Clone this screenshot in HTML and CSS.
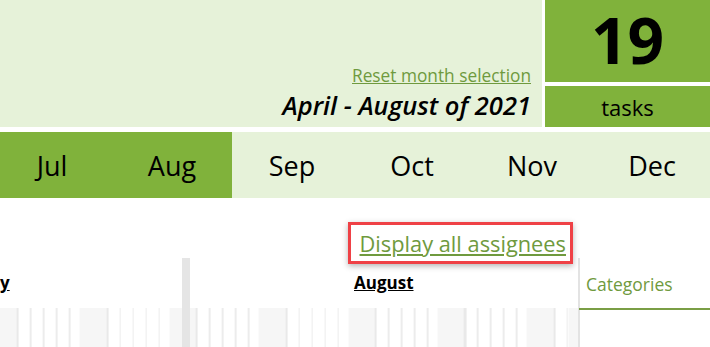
FILE: index.html
```html
<!DOCTYPE html>
<html lang="en">
<head>
    <title>Tasks overview</title>
    <meta charset="UTF-8">
    <meta name="viewport" content="width=device-width, initial-scale=1.0">
    <link rel="stylesheet" href="styles.css">
</head>
<body>
    <header class="summary">
        <div class="period">
            <a class="reset-link" href="#">Reset month selection</a>
            <div class="period-title">April - August of 2021</div>
        </div>
        <div class="count">
            <div class="count-number">19</div>
            <div class="count-label">tasks</div>
        </div>
    </header>

    <nav class="months">
        <div class="month selected">Jul</div>
        <div class="month selected">Aug</div>
        <div class="month">Sep</div>
        <div class="month">Oct</div>
        <div class="month">Nov</div>
        <div class="month">Dec</div>
    </nav>

    <div class="toolbar">
        <span class="highlight"><a class="assignees-link" href="#">Display all assignees</a></span>
    </div>

    <main class="board">
        <section class="timeline">
            <div class="timeline-head">
                <span class="month-label july">July</span>
                <span class="month-label">August</span>
            </div>
            <div class="days"></div>
            <div class="today-marker"></div>
        </section>
        <aside class="side">
            <div class="side-tab">Categories</div>
        </aside>
    </main>
</body>
</html>
```

FILE: styles.css
```css
html, body {
    overflow: hidden;
}
body {
    margin: 0;
    font-family: "Open Sans", "DejaVu Sans", sans-serif;
    background-color: #fff;
    color: #000;
    height: 100vh;
    display: flex;
    flex-direction: column;
}
a {
    color: #6f9a3e;
}

/* summary header */
.summary {
    display: flex;
    height: 127px;
    flex: none;
}
.period {
    flex: 1;
    background-color: #e6f2d9;
    display: flex;
    flex-direction: column;
    align-items: flex-end;
    justify-content: flex-end;
    padding: 0 11px 4px 0;
}
.reset-link {
    font-size: 17.3px;
    line-height: 22px;
}
.period-title {
    font-size: 25.5px;
    font-weight: 600;
    font-style: italic;
    line-height: 36px;
}
.count {
    width: 165px;
    border-left: 3px solid #fff;
    display: flex;
    flex-direction: column;
}
.count-number {
    height: 82px;
    background-color: #80b23b;
    font-size: 64px;
    font-weight: 700;
    line-height: 80px;
    text-align: center;
}
.count-label {
    flex: 1;
    margin-top: 4px;
    background-color: #80b23b;
    font-size: 22px;
    display: flex;
    align-items: center;
    justify-content: center;
}

/* month picker */
.months {
    flex: none;
    display: flex;
    height: 66px;
    margin: 5px 0 0 -8px;
    background-color: #e6f2d9;
    overflow: hidden;
}
.month {
    flex: 0 0 120px;
    display: flex;
    align-items: center;
    justify-content: center;
    font-size: 27px;
}
.month.selected {
    background-color: #80b23b;
}

/* toolbar */
.toolbar {
    flex: none;
    height: 60px;
    display: flex;
    justify-content: flex-end;
    align-items: flex-start;
    padding-right: 137px;
}
.highlight {
    margin-top: 24px;
    height: 36px;
    display: flex;
    align-items: center;
    padding: 0 4px 0 9px;
    border: 3px solid #ef4146;
    box-shadow: 0 2px 6px rgba(0, 0, 0, 0.3);
    position: relative;
    z-index: 2;
}
.assignees-link {
    font-size: 21.8px;
}

/* board */
.board {
    flex: 1;
    display: flex;
}
.timeline {
    flex: 1;
    position: relative;
    overflow: hidden;
    display: flex;
    flex-direction: column;
}
.timeline-head {
    height: 50px;
    display: flex;
    padding-top: 13px;
    box-sizing: border-box;
}
.month-label {
    flex: none;
    font-size: 17px;
    font-weight: 700;
    text-decoration: underline;
}
.month-label.july {
    margin-left: -22px;
    width: 376px;
}
.days {
    flex: 1;
    background-image: repeating-linear-gradient(to right,
        #f6f6f6 0, #f6f6f6 26.5px,
        #e9e9e9 26.5px, #e9e9e9 28.5px,
        #fff 28.5px, #fff 39.5px,
        #ececec 39.5px, #ececec 41px,
        #fff 41px, #fff 52.5px,
        #ececec 52.5px, #ececec 54px,
        #fff 54px, #fff 65.5px,
        #ececec 65.5px, #ececec 67px,
        #fff 67px, #fff 78.5px,
        #ececec 78.5px, #ececec 80px,
        #fff 80px, #fff 89.4px);
    background-position: -9.4px 0;
}
.today-marker {
    position: absolute;
    top: 0;
    bottom: 0;
    left: 182px;
    width: 8px;
    background-color: #e5e5e5;
}
.side {
    width: 130px;
    flex: none;
    border-left: 2px solid #e3e3e3;
}
.side-tab {
    height: 52px;
    box-sizing: border-box;
    padding: 14px 0 0 7px;
    border-bottom: 2px solid #7a9e45;
    margin-left: -1px;
    color: #6f9a3e;
    font-size: 17.5px;
}
```
